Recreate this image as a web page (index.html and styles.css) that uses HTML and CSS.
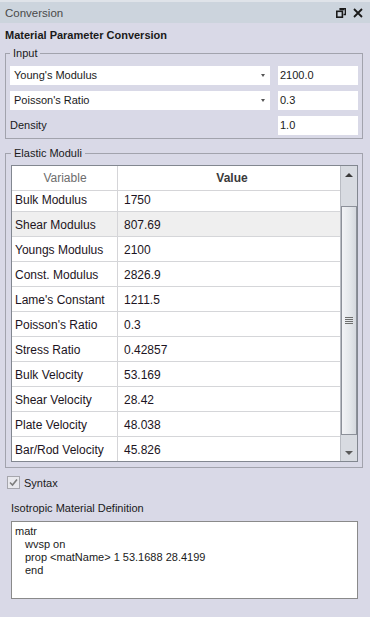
FILE: index.html
```html
<!DOCTYPE html>
<html lang="en">
    <head>
        <meta charset="utf-8">
        <title>Conversion</title>
        <link rel="stylesheet" href="styles.css">
    </head>
    <body>
        <div class="titlebar">
            <span class="title">Conversion</span>
            <div class="title-icons">
                <svg width="10" height="10" viewBox="0 0 10 10">
                    <path d="M3.5 0.5h6v6h-2" fill="none" stroke="#1a1a1a" stroke-width="1.6"/>
                    <rect x="0.8" y="3.3" width="5.6" height="5.9" fill="none" stroke="#1a1a1a" stroke-width="1.6"/>
                    <path d="M3.5 1.5h5" stroke="#1a1a1a" stroke-width="1.6"/>
                </svg>
                <svg width="10" height="10" viewBox="0 0 10 10">
                    <path d="M1 1L9 9M9 1L1 9" stroke="#1a1a1a" stroke-width="1.8"/>
                </svg>
            </div>
        </div>

        <div class="panel">
            <h1>Material Parameter Conversion</h1>

            <fieldset class="group input-group">
                <legend>Input</legend>
                <div class="input-row">
                    <div class="combo">Young's Modulus<span class="combo-arrow"></span></div>
                    <div class="field">2100.0</div>
                </div>
                <div class="input-row">
                    <div class="combo">Poisson's Ratio<span class="combo-arrow"></span></div>
                    <div class="field">0.3</div>
                </div>
                <div class="input-row">
                    <div class="label">Density</div>
                    <div class="field">1.0</div>
                </div>
            </fieldset>

            <fieldset class="group moduli-group">
                <legend>Elastic Moduli</legend>
                <div class="table">
                    <div class="table-main">
                        <div class="table-head">
                            <div class="col-var">Variable</div>
                            <div class="col-val">Value</div>
                        </div>
                        <div class="table-view">
                            <div class="table-rows">
                                <div class="row"><div class="col-var">Bulk Modulus</div><div class="col-val">1750</div></div>
                                <div class="row row-hover"><div class="col-var">Shear Modulus</div><div class="col-val">807.69</div></div>
                                <div class="row"><div class="col-var">Youngs Modulus</div><div class="col-val">2100</div></div>
                                <div class="row"><div class="col-var">Const. Modulus</div><div class="col-val">2826.9</div></div>
                                <div class="row"><div class="col-var">Lame's Constant</div><div class="col-val">1211.5</div></div>
                                <div class="row"><div class="col-var">Poisson's Ratio</div><div class="col-val">0.3</div></div>
                                <div class="row"><div class="col-var">Stress Ratio</div><div class="col-val">0.42857</div></div>
                                <div class="row"><div class="col-var">Bulk Velocity</div><div class="col-val">53.169</div></div>
                                <div class="row"><div class="col-var">Shear Velocity</div><div class="col-val">28.42</div></div>
                                <div class="row"><div class="col-var">Plate Velocity</div><div class="col-val">48.038</div></div>
                                <div class="row"><div class="col-var">Bar/Rod Velocity</div><div class="col-val">45.826</div></div>
                            </div>
                        </div>
                    </div>
                    <div class="scrollbar">
                        <div class="scroll-btn"><span class="arrow-up"></span></div>
                        <div class="scroll-track">
                            <div class="scroll-thumb"><span class="grip"></span></div>
                        </div>
                        <div class="scroll-btn"><span class="arrow-down"></span></div>
                    </div>
                </div>
            </fieldset>

            <div class="check-row">
                <span class="checkbox">
                    <svg width="9" height="9" viewBox="0 0 9 9">
                        <path d="M1 4.5L3.5 7L8 1.5" fill="none" stroke="#7d7d7d" stroke-width="1.6"/>
                    </svg>
                </span>
                <span>Syntax</span>
            </div>

            <div class="def-label">Isotropic Material Definition</div>
            <div class="code">
                <div>matr</div>
                <div class="indent">wvsp on</div>
                <div class="indent">prop &lt;matName&gt; 1 53.1688 28.4199</div>
                <div class="indent">end</div>
            </div>
        </div>
    </body>
</html>
```

FILE: styles.css
```css
body {
    margin: 0;
    background-color: #d9d9e7;
    font-family: "Liberation Sans", Arial, sans-serif;
    font-size: 11px;
    color: #1a1a1a;
}

.titlebar {
    height: 21px;
    display: flex;
    align-items: center;
    justify-content: space-between;
    padding: 0 7px 0 5px;
    background-color: #ccd4dd;
    border-top: 2px solid #dfe3e9;
}

.title {
    color: #4a4a4a;
    font-size: 11.5px;
}

.title-icons {
    display: flex;
    gap: 7px;
    margin-top: 1px;
}

.panel {
    padding: 0 7px 0 5px;
}

h1 {
    margin: 0;
    font-size: 11px;
    font-weight: bold;
    line-height: 24px;
}

.group {
    margin: 0;
    border: 1px solid #a2a3ad;
    min-width: 0;
}

.group legend {
    padding: 0 3px;
    line-height: 12px;
}

.input-group {
    padding: 7px 4px 3px 4px;
}

.input-row {
    display: flex;
    justify-content: space-between;
    height: 19px;
    line-height: 19px;
}

.input-row + .input-row {
    margin-top: 6px;
}

.combo {
    position: relative;
    width: 256px;
    padding-left: 4px;
    background-color: #fff;
}

.combo-arrow {
    position: absolute;
    right: 5px;
    top: 8px;
    border-left: 2.5px solid transparent;
    border-right: 2.5px solid transparent;
    border-top: 3px solid #555;
}

.field {
    width: 78px;
    padding-left: 2px;
    background-color: #fff;
}

.moduli-group {
    margin-top: 8px;
    padding: 6px 4px 5px 5px;
}

.table {
    display: flex;
    border: 1px solid #828790;
    background-color: #fff;
}

.table-main {
    flex: 1;
    min-width: 0;
}

.table-head {
    display: flex;
    height: 24px;
    line-height: 25px;
    border-bottom: 1px solid #d5d5d8;
    font-size: 12px;
}

.table-head .col-var {
    color: #6d6d6d;
    text-align: center;
}

.table-head .col-val {
    font-weight: bold;
    color: #3a3a3a;
    text-align: center;
}

.col-var {
    width: 104px;
    padding-left: 1px;
    border-right: 1px solid #d5d5d8;
    flex-shrink: 0;
}

.col-val {
    flex: 1;
    padding-left: 6px;
}

.table-view {
    height: 270px;
    overflow: hidden;
}

.table-rows {
    margin-top: -4px;
}

.row {
    display: flex;
    height: 24px;
    line-height: 26px;
    border-bottom: 1px solid #d5d6d9;
    font-size: 12px;
    color: #1c1422;
}

.row .col-var {
    padding-left: 3px;
    width: 102px;
}

.row-hover {
    background-color: #efefef;
}

.scrollbar {
    width: 16px;
    display: flex;
    flex-direction: column;
    background-color: #d8dbe1;
    border-left: 1px solid #b9bcc3;
}

.scroll-btn {
    height: 17px;
    display: flex;
    align-items: center;
    justify-content: center;
}

.arrow-up {
    border-left: 4px solid transparent;
    border-right: 4px solid transparent;
    border-bottom: 4px solid #3a3a3a;
}

.arrow-down {
    border-left: 4px solid transparent;
    border-right: 4px solid transparent;
    border-top: 4px solid #5a5a5a;
}

.scroll-track {
    flex: 1;
    padding: 23px 0 9px 0;
}

.scroll-thumb {
    height: 100%;
    box-sizing: border-box;
    border: 1px solid #8c9099;
    background: linear-gradient(to right, #f2f3f6, #e3e6ea 60%, #d4d8de);
    display: flex;
    align-items: center;
    justify-content: center;
}

.grip {
    width: 8px;
    height: 7px;
    background: repeating-linear-gradient(to bottom, #6e6e6e 0, #6e6e6e 1px, transparent 1px, transparent 2px);
}

.check-row {
    display: flex;
    align-items: center;
    gap: 4px;
    margin-top: 8px;
    margin-left: 2px;
    height: 13px;
}

.checkbox {
    width: 11px;
    height: 11px;
    border: 1px solid #a6a6ad;
    background-color: #e9e9ee;
    display: flex;
    align-items: center;
    justify-content: center;
}

.def-label {
    margin: 13px 0 7px 6px;
    line-height: 12px;
}

.code {
    margin-left: 6px;
    width: 339px;
    height: 73px;
    padding: 3px 3px 0 3px;
    border: 1px solid #8a8a8a;
    background-color: #fff;
    line-height: 13px;
}

.indent {
    padding-left: 10px;
}
```
